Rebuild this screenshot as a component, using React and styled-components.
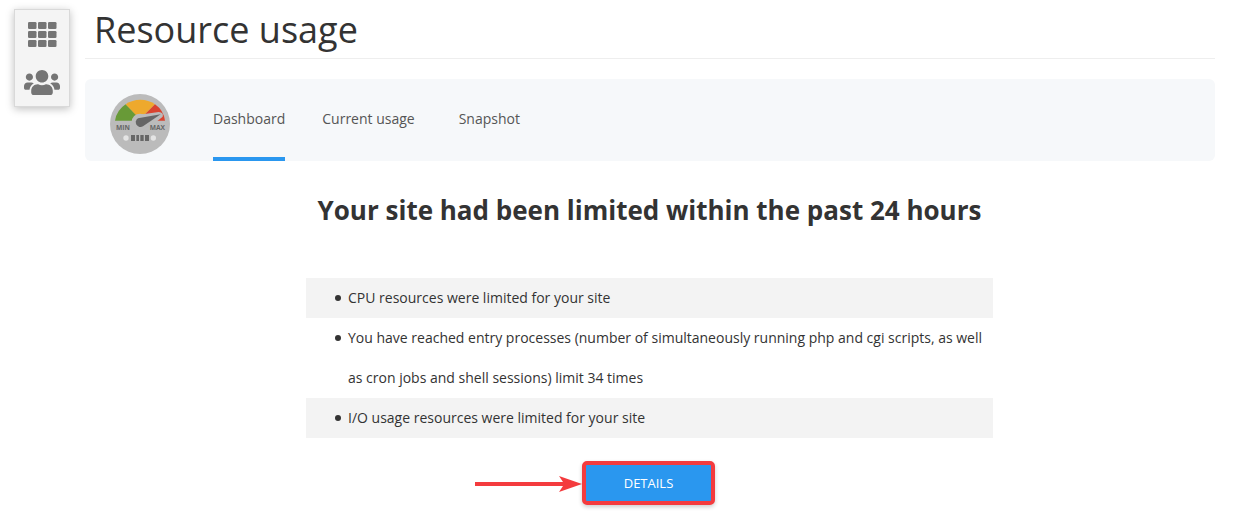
import React from 'react'
import styled, { createGlobalStyle } from 'styled-components'
import { FaUsers } from 'react-icons/fa'

const tabs = ['Dashboard', 'Current usage', 'Snapshot']

const limits = [
  'CPU resources were limited for your site',
  'You have reached entry processes (number of simultaneously running php and cgi scripts, as well as cron jobs and shell sessions) limit 34 times',
  'I/O usage resources were limited for your site',
]

const GridIcon = () => (
  <svg width="29" height="25" viewBox="0 0 29 25" fill="currentColor" aria-hidden="true">
    {[0, 9, 18].map(y => [0, 10, 20].map(x => (
      <rect key={`${x}-${y}`} x={x} y={y} width="8.5" height="7" rx="1.3" />
    )))}
  </svg>
)

const GaugeIcon = () => (
  <svg width="60" height="60" viewBox="0 0 180 180" aria-hidden="true">
    <circle cx="90" cy="90" r="90" fill="#bbbbbb" />
    <path d="M15 80 A75 72 0 0 1 47 31 L90 74 L90 80 Z" fill="#689a37" />
    <path d="M47 31 A75 72 0 0 1 135 31 L90 76 Z" fill="#eea92d" />
    <path d="M135 31 A75 72 0 0 1 165 80 L90 80 L90 76 Z" fill="#d9432f" />
    <circle cx="90" cy="84" r="25" fill="#bbbbbb" />
    <path d="M88 62 L146 54 Q162 56 158 68 L145 79 L98 102 Z" fill="#bbbbbb" />
    <path d="M84 73 L152 61 L99 97 A14 14 0 1 1 84 73 Z" fill="#666666" />
    <GaugeText x="18" y="107">MIN</GaugeText>
    <GaugeText x="119" y="107">MAX</GaugeText>
    <circle cx="48" cy="132" r="8" fill="#e4e4e4" />
    <circle cx="130" cy="132" r="8" fill="#e4e4e4" />
    <path d="M63 123h12v18h-12z M79 123h8v18h-8z M91 123h10v18h-10z M105 123h12v18h-12z" fill="#666666" />
  </svg>
)

const App = () => {
  const [active, setActive] = React.useState('Dashboard')

  return (
    <Page>
      <GlobalStyle />
      <Sidebar aria-label="Main">
        <SideLink href="#apps" aria-label="Applications"><GridIcon /></SideLink>
        <SideLink href="#users" aria-label="Users"><UsersIcon /></SideLink>
      </Sidebar>
      <Main>
        <Title>Resource usage</Title>
        <TabBar>
          <GaugeIcon />
          <Tabs>
            {tabs.map(tab => (
              <Tab key={tab} type="button" $active={tab === active} onClick={() => setActive(tab)}>
                {tab}
              </Tab>
            ))}
          </Tabs>
        </TabBar>
        <Content>
          <Heading>Your site had been limited within the past 24 hours</Heading>
          <LimitList>
            {limits.map(text => <Limit key={text}>{text}</Limit>)}
          </LimitList>
          <Actions>
            <Arrow width="107" height="20" viewBox="0 0 107 20" aria-hidden="true">
              <path d="M0 9H88L84 3L107 11L84 19L88 13H0Z" fill="#f43b3e" />
            </Arrow>
            <DetailsButton type="button">DETAILS</DetailsButton>
          </Actions>
        </Content>
      </Main>
    </Page>
  )
}

const GlobalStyle = createGlobalStyle`
  * {
    box-sizing: border-box;
  }
  body {
    margin: 0;
    background: #ffffff;
    color: #333333;
    font-family: "Open Sans", sans-serif;
    font-size: 14px;
  }
`

const Page = styled.div`
  display: flex;
  align-items: flex-start;
  gap: 15px;
  padding: 0 27px 20px 14px;
`

const Sidebar = styled.nav`
  display: flex;
  flex-direction: column;
  flex-shrink: 0;
  width: 56px;
  margin-top: 9px;
  background: #f4f4f4;
  border: 1px solid #d9d9d9;
  box-shadow: 0 2px 8px rgba(0, 0, 0, 0.25);
`

const SideLink = styled.a`
  display: flex;
  align-items: center;
  justify-content: center;
  height: 48px;
  color: #757575;
`

const UsersIcon = styled(FaUsers)`
  width: 36px;
  height: 29px;
`

const Main = styled.main`
  flex: 1;
  min-width: 0;
`

const Title = styled.h1`
  margin: 0 0 20px;
  padding: 5px 9px 4px;
  border-bottom: 1px solid #eeeeee;
  font-size: 36px;
  font-weight: 400;
  line-height: 49px;
`

const TabBar = styled.div`
  display: flex;
  align-items: stretch;
  height: 82px;
  padding-left: 25px;
  background: #f6f8fa;
  border-radius: 6px;

  > svg {
    flex-shrink: 0;
    margin-top: 15px;
  }
`

const Tabs = styled.div`
  display: flex;
  gap: 30px;
  margin-left: 43px;
`

const Tab = styled.button`
  padding: 0 ${props => (props.$active ? 0 : '7px')};
  background: none;
  border: 0;
  border-bottom: 4px solid ${props => (props.$active ? '#2a97ef' : 'transparent')};
  color: #555555;
  font: inherit;
  cursor: pointer;
`

const GaugeText = styled.text`
  font-family: "Open Sans", sans-serif;
  font-size: 20px;
  font-weight: 700;
  fill: #666666;
`

const Content = styled.section`
  display: flex;
  flex-direction: column;
  align-items: center;
  padding-right: 1px;
`

const Heading = styled.h2`
  margin: 30px 0 48px;
  font-size: 26px;
  font-weight: 700;
  line-height: 39px;
  text-align: center;
`

const LimitList = styled.ul`
  width: 100%;
  max-width: 687px;
  margin: 0;
  padding: 0;
  list-style: none;
`

const Limit = styled.li`
  display: flex;
  padding: 0 10px 0 29px;
  line-height: 40px;

  &:nth-child(odd) {
    background: #f3f3f3;
  }

  &::before {
    content: "";
    flex-shrink: 0;
    width: 6px;
    height: 6px;
    margin: 17px 7px 0 0;
    border-radius: 50%;
    background: #333333;
  }
`

const Actions = styled.div`
  display: grid;
  grid-template-columns: 1fr auto 1fr;
  align-items: center;
  width: 100%;
  margin-top: 23px;
  padding-right: 2px;
`

const Arrow = styled.svg`
  justify-self: end;
`

const DetailsButton = styled.button`
  width: 133px;
  height: 44px;
  background: #2a97ef;
  border: 4px solid #f43b3e;
  border-radius: 5px;
  box-shadow: 0 2px 4px rgba(0, 0, 0, 0.2);
  color: #ffffff;
  font-family: inherit;
  font-size: 13px;
  cursor: pointer;
`

export default App
